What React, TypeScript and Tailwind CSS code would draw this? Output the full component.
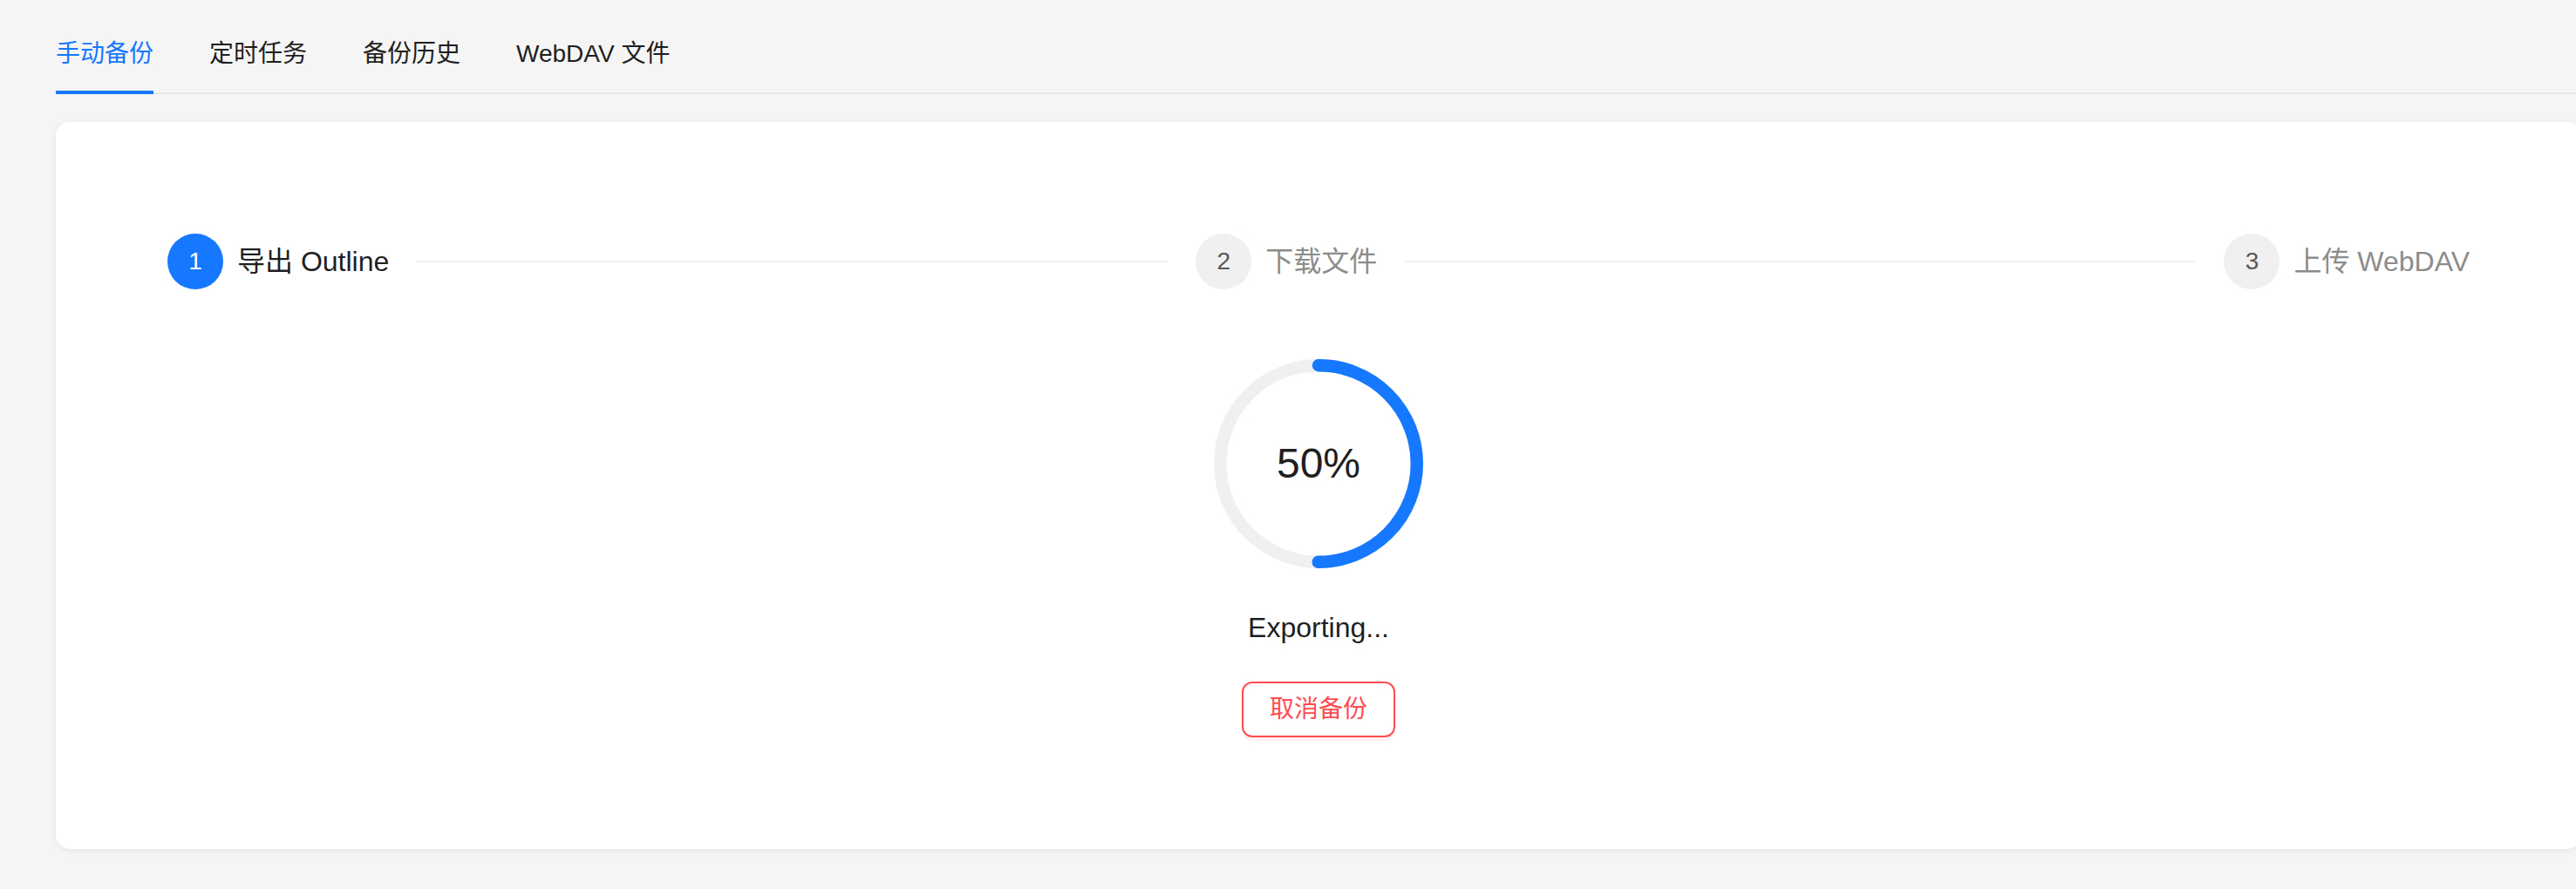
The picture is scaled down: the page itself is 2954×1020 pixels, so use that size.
import React from "react";

const FONT = { fontFamily: '"Liberation Sans", "Noto Sans CJK SC", Arial, sans-serif' };

function Tabs() {
  const tabs = ["手动备份", "定时任务", "备份历史", "WebDAV 文件"];
  return (
    <div className="flex w-[2896px] border-b-2 border-[#e6e6e6]">
      <div className="flex gap-[64px]">
        {tabs.map((t, i) => (
          <div
            key={t}
            className={
              "relative pt-[24px] pb-[22px] text-[28px] leading-[44px] whitespace-nowrap " +
              (i === 0 ? "text-[#1677ff]" : "text-[#1f1f1f]")
            }
          >
            {t}
            {i === 0 && (
              <div className="absolute left-0 right-0 bottom-[-2px] h-[4px] bg-[#1677ff]" />
            )}
          </div>
        ))}
      </div>
    </div>
  );
}

function StepIcon({ n, active }: { n: number; active: boolean }) {
  return (
    <div
      className={
        "flex h-[64px] w-[64px] shrink-0 items-center justify-center rounded-full text-[28px] " +
        (active ? "bg-[#1677ff] text-white" : "bg-[#f0f0f0] text-[#595959]")
      }
    >
      {n}
    </div>
  );
}

function Steps() {
  return (
    <div className="flex h-[64px] w-full items-center">
      <div className="flex min-w-0 flex-1 basis-0 items-center overflow-hidden">
        <StepIcon n={1} active />
        <div className="ml-[16px] whitespace-nowrap text-[32px] leading-[64px] text-[#1f1f1f]">导出 Outline</div>
        <div className="ml-[32px] h-[2px] flex-1 bg-[#f0f0f0]" />
      </div>
      <div className="flex min-w-0 flex-1 basis-0 items-center overflow-hidden pl-[32px]">
        <StepIcon n={2} active={false} />
        <div className="ml-[16px] whitespace-nowrap text-[32px] leading-[64px] text-[#8c8c8c]">下载文件</div>
        <div className="ml-[32px] h-[2px] flex-1 bg-[#f0f0f0]" />
      </div>
      <div className="flex flex-none items-center pl-[32px]">
        <StepIcon n={3} active={false} />
        <div className="ml-[16px] whitespace-nowrap text-[32px] leading-[64px] text-[#8c8c8c]">上传 WebDAV</div>
      </div>
    </div>
  );
}

function ProgressRing({ percent }: { percent: number }) {
  const r = 47;
  const c = 2 * Math.PI * r;
  const len = (c * percent) / 100;
  return (
    <div className="relative h-[240px] w-[240px]">
      <svg viewBox="0 0 100 100" className="h-[240px] w-[240px] -rotate-90">
        <circle cx="50" cy="50" r={r} fill="none" stroke="#f0f0f0" strokeWidth="6" />
        <circle
          cx="50"
          cy="50"
          r={r}
          fill="none"
          stroke="#1677ff"
          strokeWidth="6"
          strokeLinecap="round"
          style={{ strokeDasharray: `${len} ${c}` }}
        />
      </svg>
      <div className="absolute inset-0 flex items-center justify-center text-[48px] leading-none text-[#1f1f1f]">
        {percent}%
      </div>
    </div>
  );
}

export default function App() {
  return (
    <div className="min-h-[1020px] w-[2954px] overflow-hidden bg-[#f5f5f5]" style={FONT}>
      <div className="pl-[64px] pt-[16px]">
        <Tabs />
        <div className="mt-[32px] flex w-[2896px] flex-col items-center rounded-[16px] bg-white px-[128px] pt-[128px] pb-[128px] shadow-[0_2px_8px_rgba(0,0,0,0.07)]">
          <Steps />
          <div className="mt-[80px]">
            <ProgressRing percent={50} />
          </div>
          <div className="mt-[44px] text-[32px] leading-[48px] text-[#1f1f1f]">Exporting...</div>
          <button className="mt-[38px] flex h-[64px] w-[176px] items-center justify-center rounded-[12px] border-2 border-[#ff4d4f] bg-white text-[28px] text-[#ff4d4f] shadow-[0_4px_0_rgba(255,38,5,0.06)]">
            取消备份
          </button>
        </div>
      </div>
    </div>
  );
}
